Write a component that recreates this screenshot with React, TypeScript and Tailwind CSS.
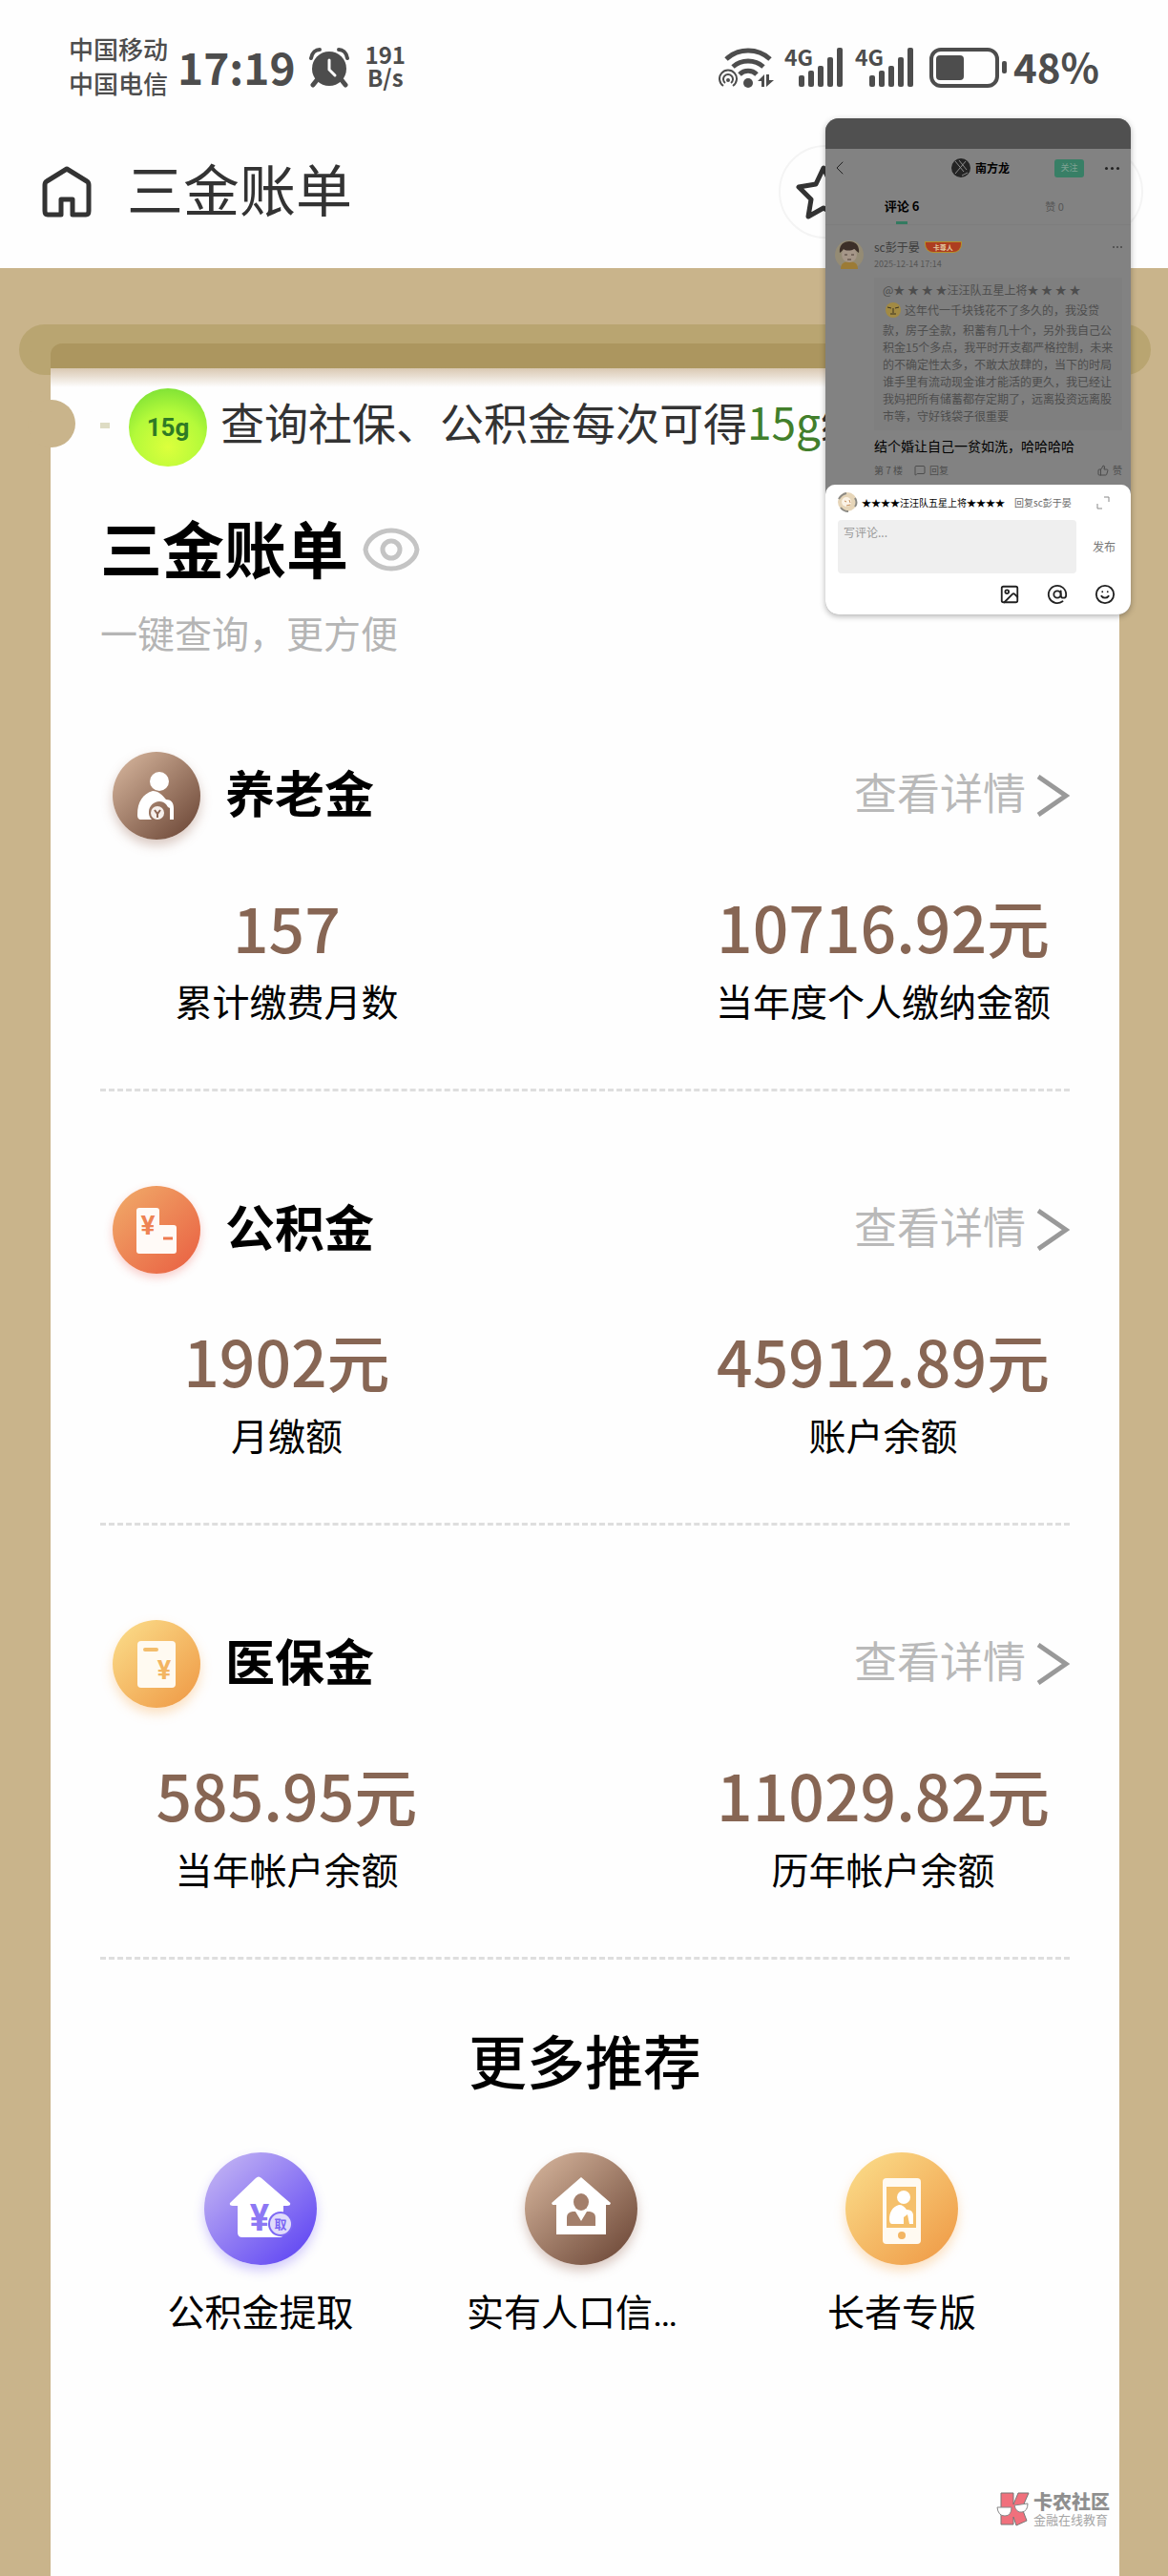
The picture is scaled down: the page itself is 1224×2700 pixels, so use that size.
import React from "react";
import { AtSign, ChevronLeft, Image as ImageIcon, MessageSquare, Smile, ThumbsUp } from "lucide-react";

type Tone = "brown" | "orange" | "yellow" | "purple";

const TONES: Record<Tone, [string, string]> = {
  brown: ["#cfae96", "#75503f"],
  orange: ["#f0a566", "#ea6746"],
  yellow: ["#fad885", "#f0a04c"],
  purple: ["#bfb0f3", "#654cf3"],
};

const SHADOWS: Record<Tone, string> = {
  brown: "shadow-[0_6px_12px_rgba(150,100,80,0.35)]",
  orange: "shadow-[0_4px_10px_rgba(235,90,80,0.3)]",
  yellow: "shadow-[0_6px_12px_rgba(245,170,80,0.35)]",
  purple: "shadow-[0_6px_12px_rgba(110,85,245,0.3)]",
};

function Disc({ id, tone, size, children }: { id: string; tone: Tone; size: number; children: React.ReactNode }) {
  const [from, to] = TONES[tone];
  return (
    <span className={`block shrink-0 rounded-full ${SHADOWS[tone]}`}>
      <svg width={size} height={size} viewBox={`0 0 ${size} ${size}`} aria-hidden="true" className="block">
        <defs>
          <linearGradient id={id} x1="0.1" y1="0.1" x2="0.85" y2="0.9">
            <stop offset="0" stopColor={from} />
            <stop offset="1" stopColor={to} />
          </linearGradient>
        </defs>
        <circle cx={size / 2} cy={size / 2} r={size / 2} fill={`url(#${id})`} />
        {children}
      </svg>
    </span>
  );
}

function Yen({ x, y, size, fill }: { x: number; y: number; size: number; fill: string }) {
  return (
    <text x={x} y={y} textAnchor="middle" fontSize={size} fontWeight="700" fontFamily="Roboto, sans-serif" fill={fill}>
      ¥
    </text>
  );
}

function PensionIcon() {
  return (
    <Disc id="pension" tone="brown" size={92}>
      <circle cx="49" cy="31" r="10" fill="#fff" />
      <path
        d="M42 41c-10 3-16 11-16 25 0 3 1 5 4 5h11a10 10 0 0 1-3-8c0-6 5-11 11-11 3 0 5 1 7 3l2 3 2 1v12h4V59c0-6-3-9-8-9-4-5-8-9-14-9z"
        fill="#fff"
      />
      <circle cx="47" cy="64" r="7" fill="#f6efeb" />
      <path d="M44 61l3 4 3-4M47 65v4" stroke="#8b6553" strokeWidth="2" fill="none" />
    </Disc>
  );
}

function FundIcon() {
  return (
    <Disc id="fund" tone="orange" size={92}>
      <path d="M28 23h18q3 0 3 3v15h15q3 0 3 3v24q0 3-3 3H28q-3 0-3-3V26q0-3 3-3z" fill="#fffaf7" />
      <Yen x={37} y={51} size={28} fill="#ee8353" />
      <path d="M53 55h10" stroke="#ee7b50" strokeWidth="3" />
    </Disc>
  );
}

function MedicalIcon() {
  return (
    <Disc id="medical" tone="yellow" size={92}>
      <rect x="26" y="22" width="40" height="49" rx="4" fill="#fffaf1" />
      <path d="M34 31h12" stroke="#f3bd6c" strokeWidth="4" strokeLinecap="round" />
      <Yen x={54} y={62} size={27} fill="#f3b562" />
    </Disc>
  );
}

function WithdrawIcon() {
  return (
    <Disc id="withdraw" tone="purple" size={118}>
      <path d="M54 27q3-3 6 0l30 26q1 3-3 3h-4v29q0 4-4 4H40q-5 0-5-5V56h-5q-4 0-3-3z" fill="#fff" />
      <Yen x={58} y={82} size={38} fill="#8d78f4" />
      <circle cx="80" cy="75" r="13" fill="#7c67f4" />
      <circle cx="80" cy="75" r="11" fill="#e0dbfb" />
      <text x="80" y="80" textAnchor="middle" fontSize="13" fontWeight="700" fontFamily="Noto Sans CJK SC, sans-serif" fill="#7c67f4">
        取
      </text>
    </Disc>
  );
}

function ResidentIcon() {
  return (
    <Disc id="resident" tone="brown" size={118}>
      <path d="M59 26l31 27-1 2h-4v31H33V55h-4l-1-2z" fill="#fff" />
      <ellipse cx="59" cy="52" rx="8" ry="9" fill="#a37f6b" />
      <path d="M44 77V68q0-5 6-6h3l6 10 6-10h3q6 1 6 6v9z" fill="#a37f6b" />
    </Disc>
  );
}

function ElderIcon() {
  return (
    <Disc id="elder" tone="yellow" size={118}>
      <rect x="39" y="27" width="40" height="69" rx="4" fill="#fffaf1" />
      <rect x="43" y="36" width="31" height="43" fill="#f5c06b" />
      <circle cx="61" cy="47" r="7" fill="#fff" />
      <path d="M56 55c-7 2-10 8-10 15 0 3 1 5 3 5h12v-7l4-3 2 10h4V66c0-4-3-6-7-6-2-3-4-5-8-5z" fill="#fff" />
      <circle cx="59" cy="87" r="4" fill="#f3b562" />
    </Disc>
  );
}

function AlarmIcon() {
  return (
    <svg width="42" height="42" viewBox="0 0 42 42" aria-hidden="true">
      <circle cx="21" cy="22" r="18" fill="#4d4d4d" />
      <path d="M2 11C3 5 7 2 11 2M40 11C39 5 35 2 31 2" stroke="#4d4d4d" strokeWidth="4" fill="none" strokeLinecap="round" />
      <path d="M8 34l-4 5M34 34l4 5" stroke="#4d4d4d" strokeWidth="5" strokeLinecap="round" />
      <path d="M21 13v10l6 6" stroke="#fff" strokeWidth="3" fill="none" strokeLinecap="round" />
    </svg>
  );
}

function WifiIcon() {
  return (
    <svg width="58" height="42" viewBox="0 0 58 42" aria-hidden="true">
      <g fill="none" stroke="#4d4d4d">
        <path d="M8 12C21 0 41 0 54 12" strokeWidth="5" />
        <path d="M15 20c9-8 23-8 32 0" strokeWidth="5" />
        <path d="M22 28c5-5 13-5 18 0" strokeWidth="5" />
        <path d="M5 40a9 9 0 1 1 10 0" strokeWidth="2" />
        <path d="M7 37a5 5 0 1 1 6 0" strokeWidth="2" />
      </g>
      <circle cx="31" cy="37" r="5" fill="#4d4d4d" />
      <circle cx="10" cy="34" r="2" fill="#4d4d4d" />
      <path d="M48 28v13h-3v-6h-4zM50 41V28h3v6h5z" fill="#4d4d4d" />
    </svg>
  );
}

function Signal() {
  return (
    <span className="relative block h-[42px] w-[62px]">
      <span className="absolute top-0 left-0 text-[23px] leading-[18px] font-bold">4G</span>
      <svg width="62" height="42" viewBox="0 0 62 42" aria-hidden="true" className="block">
        <g fill="#4d4d4d">
          <rect x="15" y="29" width="6" height="12" rx="2" />
          <rect x="25" y="24" width="6" height="17" rx="2" />
          <rect x="35" y="19" width="6" height="22" rx="2" />
          <rect x="45" y="10" width="6" height="31" rx="2" />
          <rect x="55" y="0" width="6" height="41" rx="2" />
        </g>
      </svg>
    </span>
  );
}

function BatteryIcon() {
  return (
    <svg width="82" height="42" viewBox="0 0 82 42" aria-hidden="true">
      <rect x="2" y="2" width="69" height="38" rx="10" fill="none" stroke="#4d4d4d" strokeWidth="4" />
      <rect x="7" y="8" width="29" height="26" rx="4" fill="#4d4d4d" />
      <rect x="76" y="14" width="5" height="13" rx="2" fill="#4d4d4d" />
    </svg>
  );
}

function StatusBar() {
  return (
    <div className="flex h-[142px] items-center justify-between px-[72px] text-[#4d4d4d]">
      <div className="flex items-center">
        <div className="mb-1 text-[26px] leading-9 font-medium">
          <div>中国移动</div>
          <div>中国电信</div>
        </div>
        <div className="mb-1 ml-2.5 text-[46px] leading-[52px] font-bold">17:19</div>
        <div className="ml-3.5">
          <AlarmIcon />
        </div>
        <div className="mb-1 ml-[17px] text-center text-[24px] leading-6 font-bold">
          <div>191</div>
          <div>B/s</div>
        </div>
      </div>
      <div className="flex items-center">
        <WifiIcon />
        <div className="ml-[11px]">
          <Signal />
        </div>
        <div className="ml-3">
          <Signal />
        </div>
        <div className="ml-4">
          <BatteryIcon />
        </div>
        <div className="mb-1 ml-1.5 text-[42px] leading-[52px] font-bold">48%</div>
      </div>
    </div>
  );
}

function TitleBar() {
  return (
    <div className="flex items-center justify-between pr-[26px] pb-[21px] pl-11">
      <div className="flex items-center">
        <button type="button" aria-label="首页">
          <svg width="52" height="54" viewBox="0 0 52 54" fill="none" stroke="#333" strokeWidth="5" strokeLinejoin="round" aria-hidden="true">
            <path d="M20 51H6q-3 0-3-4V20q0-3 2-4L26 3l21 13q2 1 2 4v27q0 4-3 4H32V35H20z" />
          </svg>
        </button>
        <div className="mb-2 ml-[37px] text-[59px] leading-[60px] text-[#333]">三金账单</div>
      </div>
      <div className="my-2.5 flex h-[98px] w-[382px] items-center rounded-full border-2 border-[#f4f4f4] pl-4">
        <button type="button" aria-label="收藏">
          <svg width="58" height="58" viewBox="0 0 58 58" fill="none" stroke="#333" strokeWidth="5" strokeLinejoin="round" aria-hidden="true">
            <path d="M29 4l8 17 18 3-13 13 3 18-16-9-16 9 3-18L3 24l18-3z" />
          </svg>
        </button>
      </div>
    </div>
  );
}

type Stat = { value: string; label: string };

function Account({ icon, title, stats }: { icon: React.ReactNode; title: string; stats: [Stat, Stat] }) {
  return (
    <section className="border-b-[3px] border-dashed border-[#dedede] pt-[99px] pb-[73px]">
      <div className="flex items-center justify-between pl-[13px]">
        <div className="flex items-center gap-[26px]">
          {icon}
          <h2 className="mb-2 text-[52px] leading-[60px] font-bold text-black">{title}</h2>
        </div>
        <a href="#detail" className="flex items-center gap-3 text-[45px] leading-[60px] text-[#b9b9b9]">
          <span className="mb-2">查看详情</span>
          <svg width="34" height="44" viewBox="0 0 34 44" fill="none" stroke="#999" strokeWidth="5" aria-hidden="true">
            <path d="M1 2l29 20L1 42" />
          </svg>
        </a>
      </div>
      <dl className="mt-[57px] grid grid-cols-[5fr_3fr_5fr]">
        {stats.map((s, i) => (
          <div key={s.label} className={i === 1 ? "col-start-3 flex flex-col-reverse items-center" : "flex flex-col-reverse items-center"}>
            <dt className="mt-[25px] text-[39px] leading-10 whitespace-nowrap text-black">{s.label}</dt>
            <dd className="text-[66px] leading-[66px] font-medium whitespace-nowrap text-[#876654]">{s.value}</dd>
          </div>
        ))}
      </dl>
    </section>
  );
}

function Service({ icon, label, clipped = false }: { icon: React.ReactNode; label: string; clipped?: boolean }) {
  return (
    <a href="#service" className="flex flex-col items-center">
      {icon}
      <span className={clipped ? "mt-[27px] w-60 text-[39px] leading-10 whitespace-nowrap text-black" : "mt-[27px] text-[39px] leading-10 whitespace-nowrap text-black"}>
        {label}
        {clipped && <span className="font-[Roboto]">…</span>}
      </span>
    </a>
  );
}

function EarnBanner() {
  return (
    <div className="flex items-center pt-[21px]">
      <span className="mb-1 h-[6px] w-[10px] bg-[#dedcc4]" />
      <span className="ml-5 grid size-[82px] shrink-0 place-items-center rounded-full bg-[radial-gradient(circle_at_50%_75%,#dcff3c_0%,#b4fa3a_50%,#7fe236_85%,#6fce4a_100%)]">
        <span className="font-[Roboto] text-[26px] leading-8 font-bold text-[#2f7a25]">15g</span>
      </span>
      <span className="mb-3.5 ml-3.5 text-[46px] leading-[60px] whitespace-nowrap text-[#333]">
        查询社保、公积金每次可得<span className="text-[#427f2b]">15g</span>绿
      </span>
    </div>
  );
}

function BoyAvatar() {
  return (
    <svg width="30" height="30" viewBox="0 0 30 30" aria-hidden="true">
      <circle cx="15" cy="15" r="15" fill="#948b74" />
      <path d="M6 30c0-6 4-8 9-8s9 2 9 8z" fill="#9c7b35" />
      <ellipse cx="15" cy="15" rx="8" ry="8" fill="#a59688" />
      <path d="M5 13C4 5 9 1 15 1s11 4 10 12c-3-2-4-4-5-4-3 2-9 2-11 0-1 1-2 3-4 4z" fill="#3c2f28" />
      <path d="M10 15h3M17 15h3M13 20h4" stroke="#4a3a35" strokeWidth="1" />
    </svg>
  );
}

function FloatingWindow() {
  return (
    <aside className="absolute top-[124px] right-[39px] w-80 overflow-hidden rounded-[14px] bg-[#828282] shadow-[0_2px_6px_rgba(0,0,0,0.3)]">
      <div className="h-8 bg-[#505050]" />
      <div className="flex h-10 items-center justify-between pr-3 pl-[3px]">
        <button type="button" aria-label="返回">
          <ChevronLeft className="size-6 text-[#222]" strokeWidth={1} />
        </button>
        <div className="ml-[58px] flex items-center gap-1">
          <svg width="21" height="21" viewBox="0 0 21 21" aria-hidden="true">
            <circle cx="10" cy="10" r="10" fill="#242424" />
            <path d="M4 3l9 11M8 2l8 10M15 3L4 16M11 18l6-3" stroke="#8a8a8a" strokeWidth="1" />
          </svg>
          <span className="text-xs leading-4 font-bold text-black">南方龙</span>
        </div>
        <div className="flex items-center gap-[22px]">
          <button type="button" className="h-[19px] w-[31px] rounded-[3px] bg-[#387f66] text-[9px] leading-4 text-[#7fa294]">
            关注
          </button>
          <span className="flex gap-[3px]">
            <i className="size-[3px] rounded-full bg-[#222]" />
            <i className="size-[3px] rounded-full bg-[#222]" />
            <i className="size-[3px] rounded-full bg-[#222]" />
          </span>
        </div>
      </div>
      <div className="grid h-10 grid-cols-2 border-b border-[#7d7d7d] pt-3 text-center">
        <div className="flex flex-col items-center">
          <span className="text-[13px] leading-4 font-bold text-black">评论 6</span>
          <span className="mt-2 h-[3px] w-3 bg-[#337a60]" />
        </div>
        <span className="text-[11px] leading-4 text-[#555]">赞 0</span>
      </div>
      <div className="flex gap-[11px] pt-4 pr-[9px] pb-[9px] pl-2.5">
        <div className="shrink-0">
          <BoyAvatar />
        </div>
        <div className="min-w-0 flex-1">
          <div className="flex items-center">
            <span className="text-xs leading-[14px] text-[#3d3d3d]">sc彭于晏</span>
            <span className="ml-1.5 rounded-b-lg bg-[#ad3d20] px-2 text-[7px] leading-[10px] font-bold text-[#e0c9a0] ring-1 ring-[#b5912b]">
              卡尊人
            </span>
            <span className="ml-auto flex gap-[2px]">
              <i className="size-[2px] bg-[#555]" />
              <i className="size-[2px] bg-[#555]" />
              <i className="size-[2px] bg-[#555]" />
            </span>
          </div>
          <div className="mt-[5px] text-[9px] leading-3 text-[#555]">2025-12-14 17:14</div>
          <div className="mt-2 bg-[#7f7f7f] pt-1 pb-1.5 pl-[9px] text-xs leading-[18px] text-[#4d4d4d]">
            <div>@★ ★ ★ ★汪汪队五星上将★ ★ ★ ★</div>
            <div className="whitespace-nowrap">
              <div className="flex h-6 items-center gap-1 pl-[3px]">
                <svg width="16" height="16" viewBox="0 0 16 16" aria-hidden="true">
                  <circle cx="8" cy="8" r="8" fill="#a28a43" />
                  <path d="M2 5l4 1M14 5l-4 1M8 6v5M5 12h6" stroke="#3b3220" strokeWidth="1" />
                </svg>
                这年代一千块钱花不了多久的，我没贷
              </div>
              款，房子全款，积蓄有几十个，另外我自己公
              <br />
              积金15个多点，我平时开支都严格控制，未来
              <br />
              的不确定性太多，不敢太放肆的，当下的时局
              <br />
              谁手里有流动现金谁才能活的更久，我已经让
              <br />
              我妈把所有储蓄都存定期了，远离投资远离股
              <br />
              市等，守好钱袋子很重要
            </div>
          </div>
          <p className="mt-[7px] text-sm leading-[18px] whitespace-nowrap text-black">结个婚让自己一贫如洗，哈哈哈哈</p>
          <div className="mt-[11px] flex items-center text-[10px] leading-3 text-[#4d4d4d]">
            <span>第 7 楼</span>
            <button type="button" className="ml-3 flex items-center gap-1">
              <MessageSquare className="size-3" strokeWidth={2} />
              回复
            </button>
            <button type="button" className="ml-auto flex items-center gap-1">
              <ThumbsUp className="size-3" strokeWidth={2} />赞
            </button>
          </div>
        </div>
      </div>
      <form className="rounded-t-[10px] bg-white pt-2 pr-4 pb-2.5 pl-[13px]" onSubmit={(e) => e.preventDefault()}>
        <div className="flex items-center text-[10px] leading-5 whitespace-nowrap">
          <svg width="21" height="21" viewBox="0 0 21 21" aria-hidden="true">
            <circle cx="10" cy="10" r="10" fill="#e6d5b8" />
            <path d="M1 7q3-5 8-6M18 6q3 5 0 9M3 16q3 4 8 4" stroke="#8c8a84" strokeWidth="2" fill="none" />
            <circle cx="9" cy="10" r="5" fill="#fbf3e6" />
            <path d="M7 9l2 1M12 8l1 3M9 14l4-1" stroke="#c58e5d" strokeWidth="1" />
          </svg>
          <span className="ml-1 text-black">★★★★汪汪队五星上将★★★★</span>
          <span className="ml-2.5 text-[#666]">回复sc彭于晏</span>
          <svg width="14" height="14" viewBox="0 0 14 14" fill="none" stroke="#888" className="mr-1.5 ml-auto" aria-hidden="true">
            <path d="M8 1h5v5M1 8v5h5" />
          </svg>
        </div>
        <div className="mt-2 flex items-center gap-[17px]">
          <textarea
            aria-label="写评论"
            placeholder="写评论..."
            className="h-14 min-w-0 flex-1 resize-none rounded-sm bg-[#efefef] px-1.5 py-1 text-xs leading-[18px] placeholder:text-[#999]"
          />
          <button type="submit" className="text-xs leading-4 text-[#777]">
            发布
          </button>
        </div>
        <div className="mt-[11px] flex justify-end gap-7 text-[#222]">
          <button type="button" aria-label="图片">
            <ImageIcon className="size-[22px]" strokeWidth={2} />
          </button>
          <button type="button" aria-label="提及">
            <AtSign className="size-[22px]" strokeWidth={2} />
          </button>
          <button type="button" aria-label="表情">
            <Smile className="size-[22px]" strokeWidth={2} />
          </button>
        </div>
      </form>
    </aside>
  );
}

function CommunityMark() {
  return (
    <div className="mt-auto -mr-[42px] flex items-center justify-end gap-1 pb-[52px]">
      <svg width="35" height="36" viewBox="0 0 35 36" aria-hidden="true">
        <path d="M5 1h13v12l5-12h11l-7 16 5 13-11 5-3-9v8H5z" fill="#f0707c" stroke="#777" strokeWidth="1" />
        <path d="M1 16h15q0 9-7 9t-8-9zM19 14l14-2q0 8-6 9t-8-7z" fill="#fff" stroke="#888" strokeWidth="1" />
      </svg>
      <div className="whitespace-nowrap">
        <div className="text-xl leading-5 font-black text-[#8f8f8f]">卡农社区</div>
        <div className="mt-0.5 text-[13px] leading-[14px] text-[#a5a5a5]">金融在线教育</div>
      </div>
    </div>
  );
}

export default function App() {
  return (
    <div className="relative flex min-h-screen flex-col bg-[#c9b48b] font-['Noto_Sans_CJK_SC',sans-serif]">
      <header className="bg-[#fefefe]">
        <StatusBar />
        <TitleBar />
      </header>
      <main className="flex flex-1 flex-col pt-[59px]">
        <div className="mr-[18px] ml-5 h-[53px] rounded-full bg-[#b9a571]" />
        <div className="relative mr-[51px] ml-[53px] -mt-[33px] flex flex-1 flex-col">
          <div className="h-[26px] rounded-t-xl bg-[#ac965f]" />
          <div className="relative flex flex-1 flex-col bg-[#fefefe] px-[52px]">
            <div className="absolute inset-x-0 top-0 h-5 bg-linear-to-b from-[#d9c8b2] to-[#fefefe]" />
            <div className="absolute top-[33px] -left-6 size-[50px] rounded-full bg-[#c9b48b]" />
            <EarnBanner />
            <div className="mt-[51px] flex items-center gap-[15px]">
              <h1 className="text-[65px] leading-[66px] font-bold text-black">三金账单</h1>
              <button type="button" aria-label="显示金额" className="mt-1.5">
                <svg width="60" height="48" viewBox="0 0 60 48" fill="none" stroke="#c4c4c4" strokeWidth="5" aria-hidden="true">
                  <path d="M3 24C4 14 16 4 30 4s26 10 27 20c-1 10-13 20-27 20S4 34 3 24z" />
                  <circle cx="30" cy="24" r="9" />
                </svg>
              </button>
            </div>
            <p className="mt-9 text-[39px] leading-10 text-[#b5b5b5]">一键查询，更方便</p>
            <div className="mt-[7px]">
              <Account
                icon={<PensionIcon />}
                title="养老金"
                stats={[
                  { value: "157", label: "累计缴费月数" },
                  { value: "10716.92元", label: "当年度个人缴纳金额" },
                ]}
              />
              <Account
                icon={<FundIcon />}
                title="公积金"
                stats={[
                  { value: "1902元", label: "月缴额" },
                  { value: "45912.89元", label: "账户余额" },
                ]}
              />
              <Account
                icon={<MedicalIcon />}
                title="医保金"
                stats={[
                  { value: "585.95元", label: "当年帐户余额" },
                  { value: "11029.82元", label: "历年帐户余额" },
                ]}
              />
            </div>
            <h2 className="mt-[75px] text-center text-[61px] leading-[60px] font-medium text-black">更多推荐</h2>
            <div className="mt-[67px] grid grid-cols-3 pr-2">
              <Service icon={<WithdrawIcon />} label="公积金提取" />
              <Service icon={<ResidentIcon />} label="实有人口信" clipped />
              <Service icon={<ElderIcon />} label="长者专版" />
            </div>
            <CommunityMark />
          </div>
        </div>
      </main>
      <FloatingWindow />
    </div>
  );
}
